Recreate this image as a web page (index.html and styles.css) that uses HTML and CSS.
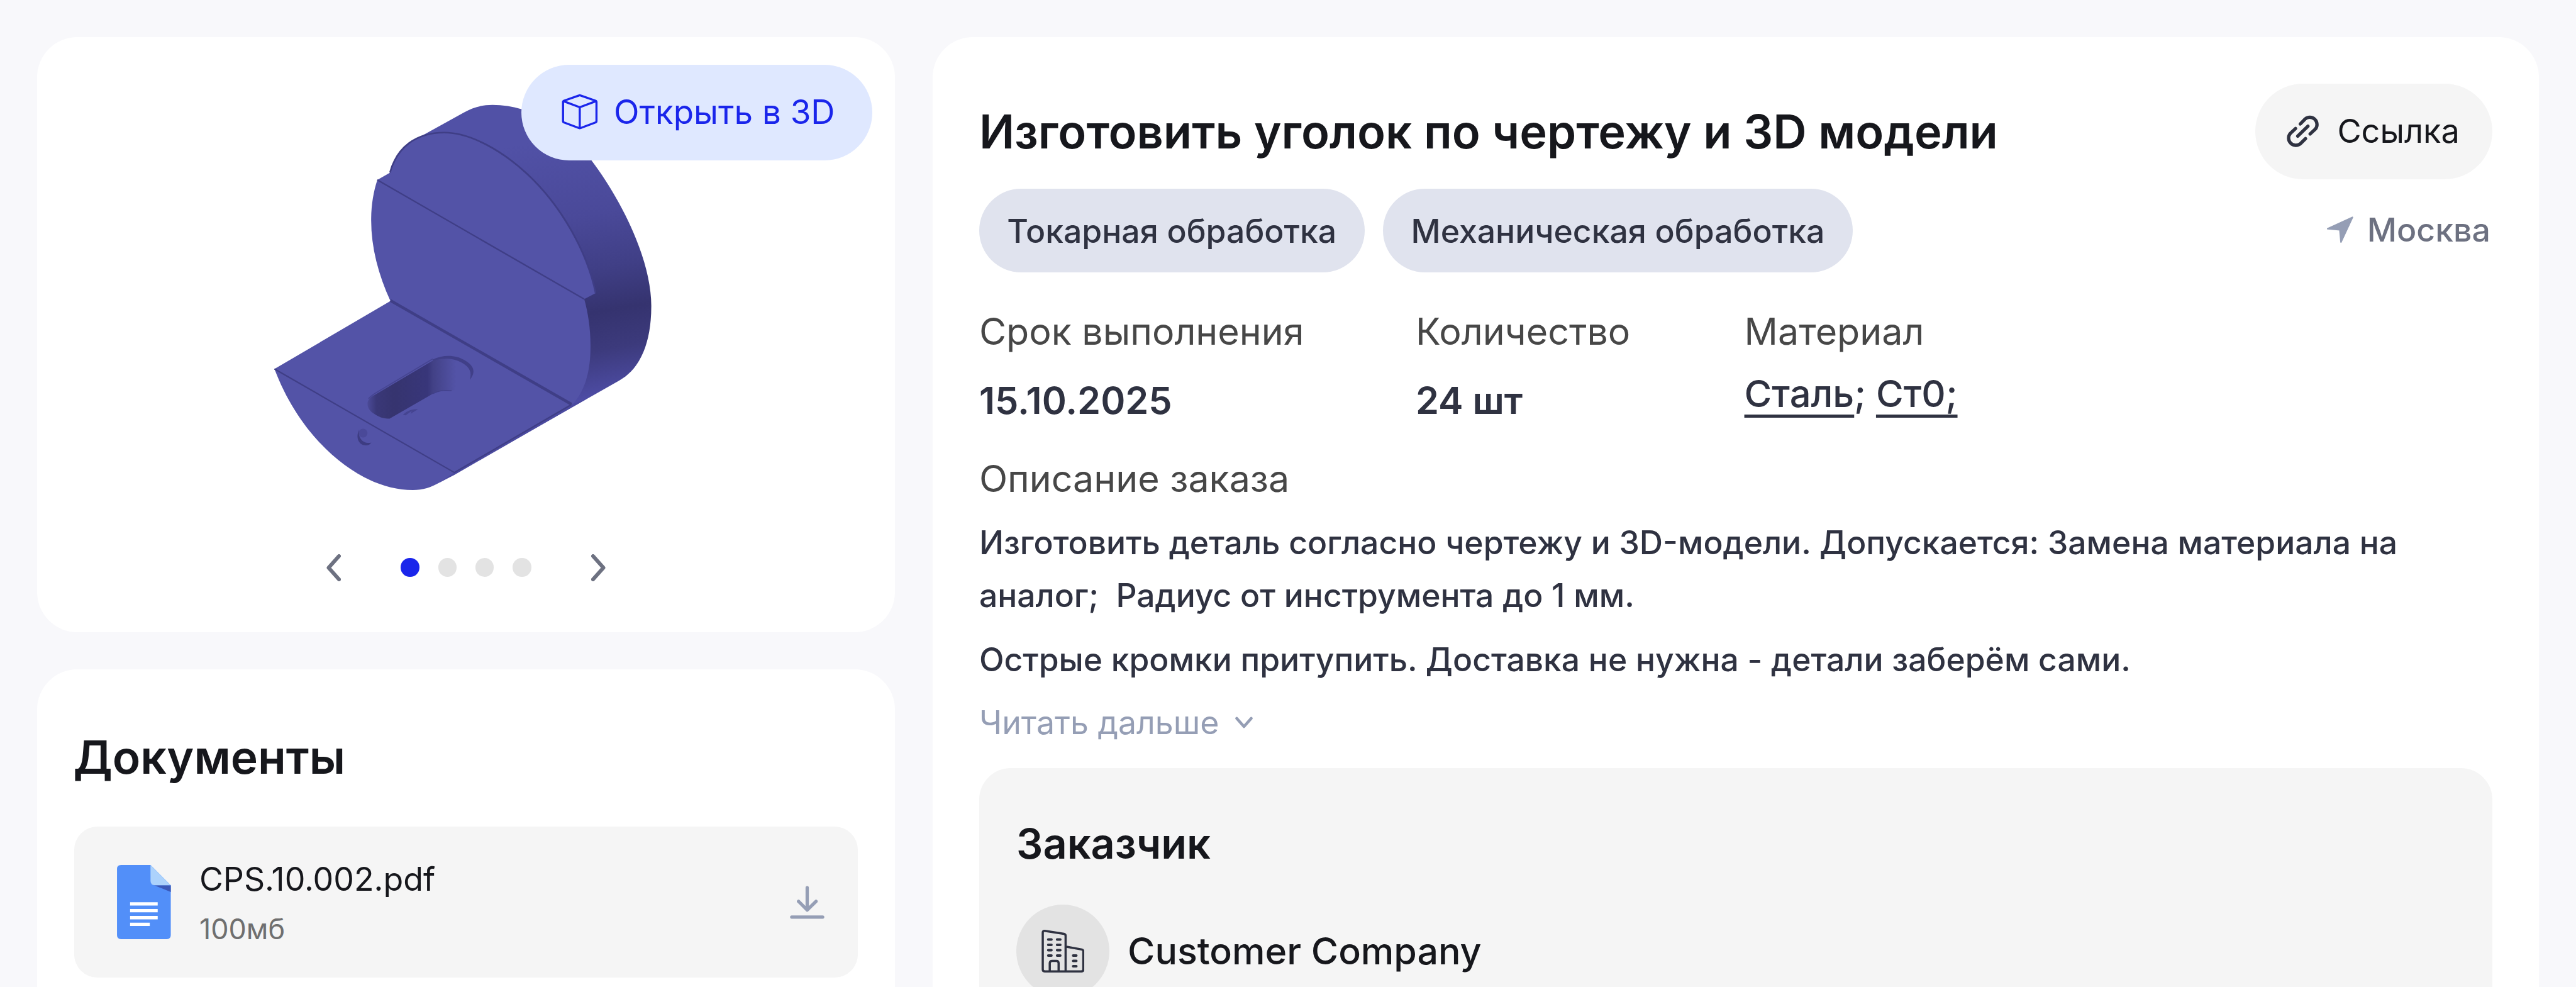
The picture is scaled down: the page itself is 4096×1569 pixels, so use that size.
FILE: index.html
```html
<!DOCTYPE html>
<html lang="ru">
<head>
  <meta charset="UTF-8" />
  <meta name="viewport" content="width=device-width, initial-scale=1.0"/>
  <title>Изготовить уголок по чертежу и 3D модели</title>
  <link rel="stylesheet" href="styles.css">
</head>
<body>
  <div class="page">
    <div class="sidebar">
      <section class="card viewer">
        <svg class="model" viewBox="493 180 700 710">
          <defs>
            <linearGradient id="side" gradientUnits="userSpaceOnUse" x1="1010" y1="250" x2="1090" y2="730">
              <stop offset="0" stop-color="#5151a6"/>
              <stop offset="0.3" stop-color="#4a4999"/>
              <stop offset="0.5" stop-color="#403f86"/>
              <stop offset="0.66" stop-color="#35336f"/>
              <stop offset="0.8" stop-color="#3c3a7c"/>
              <stop offset="1" stop-color="#504fab"/>
            </linearGradient>
            <linearGradient id="slot" gradientUnits="userSpaceOnUse" x1="665" x2="825" y1="0" y2="0">
              <stop offset="0" stop-color="#4b4a98"/>
              <stop offset="0.1" stop-color="#3a3878"/>
              <stop offset="0.3" stop-color="#36346f"/>
              <stop offset="0.68" stop-color="#38367a"/>
              <stop offset="0.74" stop-color="#424186"/>
              <stop offset="1" stop-color="#5353a7"/>
            </linearGradient>
          </defs>
          <!-- outer body -->
          <path fill="url(#side)" d="M706 312C714 286 726 267 745 256L839 204C855 194 873 190 891 190C965 190 1028 236 1069 289C1130 370 1178 475 1178 553C1178 620 1158 667 1120 688L796 872L700 500Z"/>
          <!-- upright plate -->
          <path fill="#5353a7" d="M706.500 544.300C684 495 671 445 671.700 394.600C672 370 676 346 682.800 325.500L705.700 312.300C718 267 752 240 804 240C852 240 910 274 954 315C1015 372 1062 455 1077.400 530L1056.800 541C1065 570 1069 603 1068 635C1067 675 1057 707 1037 730.200L822 855L700 760Z"/>
          <!-- base -->
          <path fill="#5353a7" d="M496.900 667.100L706.500 544.300L1033 731.900L822 854.200L796 872C780 881 765 886 747 886C650 886 545 795 496.900 667.100Z"/>
          <path fill="#4b4a9f" d="M1037 730L1060 722L822 858.500L796 872L822 854Z"/>
          <g fill="none" stroke="#3f3e86" stroke-linejoin="round">
            <path stroke-width="3" d="M705.700 312.300C718 267 752 240 804 240C852 240 910 274 954 315C1015 372 1062 455 1077.400 530"/>
            <path stroke-width="2.500" d="M682.800 325.500L1056.800 541"/>
            <path stroke-width="5" d="M706.500 543.500L1034 731"/>
            <path stroke-width="2.500" d="M496.900 667.100L822 854.200L1033 731.900"/>
          </g>
          <!-- slot and pin holes -->
          <path fill="url(#slot)" d="M665 730C665 722 672 717 683 711L783 652C800 642 830 645 846 662C856 674 857 688 849 700L817 706.500C803 705 792 707 783 712L705 757C696 757 688 755 680 750C670 745 665 738 665 730Z"/>
          <path fill="none" stroke="#464592" stroke-width="2" d="M667 721C671 716 677 712 684 708L783 649"/>
          <path fill="#403f88" d="M783 650C801 641 824 641 840 651C857 661 862 672 850 687C854 673 850 664 836 656C820 647 801 647 783 652Z"/>
          <path fill="none" stroke="#414089" stroke-width="1.500" d="M783 712C794 706 803 705 817 706.500"/>
          <path fill="#454491" d="M729 750C735 744 744 739 756 740L743 748L745 743L734 751Z"/>
          <ellipse cx="657" cy="783" rx="8" ry="8" fill="#4a4999"/>
          <path fill="#3d3c82" d="M650 777C644 788 647 803 660 805C665 806 669 804 672 800C666 802 656 800 652 792C649 787 649 781 650 777Z"/>
        </svg>
        <button class="btn btn-3d">
          <svg class="icon-cube" viewBox="45 65 205 202" fill="none" stroke="currentColor" stroke-width="11.500" stroke-linejoin="round">
            <path d="M142 78Q147 76 152 78L232 106Q238 108 238 114V217Q238 223 232 225L152 255Q147 257 142 255L62 225Q56 223 56 217V114Q56 108 62 106Z"/>
            <path d="M59 109L147 142L235 109M147 142V255"/>
          </svg>
          Открыть в 3D
        </button>
        <div class="pager">
          <svg class="chevron" viewBox="0 0 23 43"><path d="M20 3L3.500 21.500L20 40"/></svg>
          <div class="dots">
            <span class="dot active"></span>
            <span class="dot"></span>
            <span class="dot"></span>
            <span class="dot"></span>
          </div>
          <svg class="chevron" viewBox="0 0 23 43"><path d="M3 3L19.500 21.500L3 40"/></svg>
        </div>
      </section>

      <section class="card docs">
        <h2>Документы</h2>
        <div class="file">
          <svg class="icon-file" viewBox="36 41 292 403">
            <path fill="#528ff9" d="M58 41H218L328 151V422Q328 444 306 444H58Q36 444 36 422V63Q36 41 58 41Z"/>
            <path fill="#3a58b8" d="M238 151H328V188Z"/>
            <path fill="#acd2fc" d="M218 41L328 151H243Q218 151 218 127Z"/>
            <path fill="#fff" d="M107 243H257V261H107ZM107 280H257V298H107ZM107 318H257V336H107ZM107 354H214V372H107Z"/>
          </svg>
          <div class="file-info">
            <div class="file-name">CPS.10.002.pdf</div>
            <div class="file-size">100мб</div>
          </div>
          <svg class="icon-download" viewBox="50 62 188 181" fill="none" stroke="#959eb5" stroke-width="18" stroke-linecap="round" stroke-linejoin="round">
            <path d="M144 73V192M97 147L144 194L192 147M60 232H228"/>
          </svg>
        </div>
      </section>
    </div>

    <main class="card order">
      <div class="order-head">
        <h1>Изготовить уголок по чертежу и 3D модели</h1>
        <button class="btn btn-link">
          <svg class="icon-link" viewBox="68 52 180 180" fill="none" stroke="#2f3241" stroke-width="18" stroke-linecap="round">
            <path d="M145 103L170 77A39 39 0 0 1 226 131L198 157M119 128L91 154A39 39 0 0 0 146 209L173 182M131 169L186 115"/>
          </svg>
          Ссылка
        </button>
      </div>

      <div class="tags-row">
        <span class="tag">Токарная обработка</span>
        <span class="tag">Механическая обработка</span>
        <div class="city">
          <svg class="icon-arrow" viewBox="290 607 143 143">
            <path fill="#959eb5" stroke="#959eb5" stroke-width="8" stroke-linejoin="round" d="M428 612L294 674L360 680L366 746Z"/>
          </svg>
          Москва
        </div>
      </div>

      <div class="specs">
        <div class="spec spec-date">
          <div class="label">Срок выполнения</div>
          <div class="value">15.10.2025</div>
        </div>
        <div class="spec spec-count">
          <div class="label">Количество</div>
          <div class="value">24 шт</div>
        </div>
        <div class="spec">
          <div class="label">Материал</div>
          <div class="materials"><a>Сталь</a>; <a>Ст0;</a></div>
        </div>
      </div>

      <div class="label">Описание заказа</div>
      <div class="description">
        <p>Изготовить деталь согласно чертежу и 3D-модели. Допускается: Замена материала на<br>аналог;&nbsp; Радиус от инструмента до 1 мм.</p>
        <p>Острые кромки притупить. Доставка не нужна - детали заберём сами.</p>
      </div>
      <div class="more">
        Читать дальше
        <svg class="icon-down" viewBox="0 0 32 20"><path d="M4.500 3L16 16L27.500 3"/></svg>
      </div>

      <section class="customer">
        <h3>Заказчик</h3>
        <div class="company">
          <div class="avatar">
            <svg class="icon-building" viewBox="186 152 234 233" fill="none" stroke="#2f3241" stroke-width="12" stroke-linejoin="round" stroke-linecap="round">
              <path d="M193 168Q193 157 204 158L308 174Q317 176 317 185V378H204Q193 378 193 367ZM317 243L405 259Q413 261 413 269V367Q413 378 402 378H317M231 378V334Q231 321 244 321H267Q279 321 279 334V378"/>
              <path stroke-width="14" d="M223 205H240M271 205H288M223 234H240M271 234H288M223 263H240M271 263H288M223 292H240M271 292H288M358 292H375M358 321H375M358 350H375"/>
            </svg>
          </div>
          Customer Company
        </div>
      </section>
    </main>
  </div>
</body>
</html>
```
FILE: styles.css
```css
* {
  margin: 0;
  padding: 0;
  box-sizing: border-box;
}

body {
  background: #f8f8fb;
  font-family: Inter, sans-serif;
  color: #16171c;
}

svg {
  display: block;
  flex-shrink: 0;
}

.page {
  display: grid;
  grid-template-columns: 1363.700px 1fr;
  grid-template-rows: minmax(0, 1fr);
  gap: 60px;
  height: 1569px;
  padding: 59.200px 59.200px 0;
  overflow: hidden;
}

.sidebar {
  display: flex;
  flex-direction: column;
  gap: 59.200px;
}

.card {
  background: #fff;
  border-radius: 64px;
}

/* buttons */
.btn {
  display: flex;
  align-items: center;
  height: 152px;
  border: none;
  border-radius: 76px;
  font-family: inherit;
  font-size: 51.800px;
  cursor: pointer;
}

.btn-3d {
  position: absolute;
  top: 44.200px;
  right: 35.400px;
  gap: 24px;
  padding: 0 60px 3px 63px;
  background: #dfe8ff;
  color: #1a25eb;
  font-size: 52.900px;
}

.btn-link {
  gap: 28px;
  padding: 0 52px 2px 49px;
  background: #f5f5f5;
  color: #16171c;
  font-size: 52.300px;
}

.icon-cube {
  width: 60px;
  height: 59px;
}

.icon-link {
  width: 53px;
  height: 53px;
}

/* model viewer */
.viewer {
  position: relative;
  height: 945.800px;
  padding-top: 99px;
}

.model {
  width: 615.800px;
  height: 624.600px;
  margin: 0 auto;
}

.pager {
  display: flex;
  justify-content: center;
  align-items: center;
  gap: 95px;
  margin-top: 98px;
}

.chevron {
  width: 23px;
  height: 43px;
  fill: none;
  stroke: #6d7181;
  stroke-width: 6;
  stroke-linecap: round;
  stroke-linejoin: round;
}

.dots {
  display: flex;
  gap: 29.600px;
}

.dot {
  width: 29.600px;
  height: 29.600px;
  border-radius: 50%;
  background: #e3e3e3;
}

.dot.active {
  background: #1a25eb;
}

/* documents */
.docs {
  flex: 1;
  padding: 95px 59.200px 0;
  border-radius: 64px 64px 0 0;
}

.docs h2 {
  margin: 0 0 65px -2px;
  font-size: 73.200px;
  font-weight: 600;
  line-height: 90px;
}

.file {
  display: flex;
  align-items: center;
  height: 240px;
  padding: 0 53px 0 68px;
  border-radius: 37px;
  background: #f5f5f5;
}

.icon-file {
  width: 85.600px;
  height: 118px;
}

.file-info {
  flex: 1;
  margin-left: 45px;
}

.file-name {
  font-size: 51.800px;
  line-height: 70px;
}

.file-size {
  margin-top: 15px;
  font-size: 44.900px;
  line-height: 60px;
  color: #6f6f6f;
}

.icon-download {
  width: 55px;
  height: 53px;
}

/* order */
.order {
  display: flex;
  flex-direction: column;
  padding: 74px 74px 0;
  border-radius: 64px 64px 0 0;
}

.order-head {
  display: flex;
  align-items: center;
  justify-content: space-between;
}

.order-head h1 {
  font-size: 74px;
  font-weight: 600;
}

.tags-row {
  display: flex;
  align-items: center;
  gap: 29.600px;
  margin-top: 15px;
}

.tag {
  height: 133px;
  padding: 0 44.400px;
  border-radius: 67px;
  background: #e0e3ee;
  color: #2f3241;
  font-size: 51.700px;
  font-weight: 500;
  line-height: 134px;
}

.city {
  display: flex;
  align-items: center;
  gap: 22px;
  margin-left: auto;
  padding: 0 3px 3px 0;
  color: #6d7181;
  font-size: 51.800px;
  font-weight: 500;
}

.icon-arrow {
  width: 42px;
  height: 42px;
}

.specs {
  display: flex;
  height: 240px;
  margin: 56.500px 0 -6px;
  color: #2f3241;
}

.spec-date {
  width: 694px;
}

.spec-count {
  width: 522.700px;
}

.label {
  color: #474747;
  font-size: 59.100px;
  line-height: 74px;
}

.value {
  margin-top: 35.500px;
  font-size: 59.400px;
  font-weight: 600;
  line-height: 74px;
}

.materials {
  margin-top: 24.500px;
  font-size: 59.600px;
  font-weight: 500;
  line-height: 74px;
}

.materials a {
  text-decoration: underline;
  text-decoration-thickness: 4.500px;
  text-decoration-skip-ink: none;
  text-underline-offset: 12px;
}

.description {
  margin-top: 22px;
  color: #2f3241;
  font-size: 51.600px;
  font-weight: 500;
  line-height: 84.500px;
  white-space: nowrap;
}

.description p + p {
  margin-top: 17.500px;
}

.more {
  display: flex;
  align-items: center;
  gap: 23px;
  margin-top: 20px;
  color: #959eb5;
  font-size: 51.800px;
  line-height: 74px;
}

.icon-down {
  width: 32px;
  height: 20px;
  margin-top: 3px;
  fill: none;
  stroke: #959eb5;
  stroke-width: 4.500;
  stroke-linecap: round;
  stroke-linejoin: round;
}

/* customer */
.customer {
  flex: 1;
  min-height: 0;
  margin-top: 36.500px;
  padding: 80px 59.200px 0;
  border-radius: 50px 50px 0 0;
  background: #f5f5f5;
  overflow: hidden;
}

.customer h3 {
  font-size: 66.600px;
  font-weight: 600;
  line-height: 80px;
}

.company {
  display: flex;
  align-items: center;
  gap: 29px;
  margin-top: 56.500px;
  font-size: 59.100px;
  font-weight: 500;
}

.avatar {
  display: flex;
  align-items: center;
  justify-content: center;
  width: 148px;
  height: 148px;
  border-radius: 50%;
  background: #e3e3e3;
}

.icon-building {
  width: 68.600px;
  height: 68.300px;
}
```
